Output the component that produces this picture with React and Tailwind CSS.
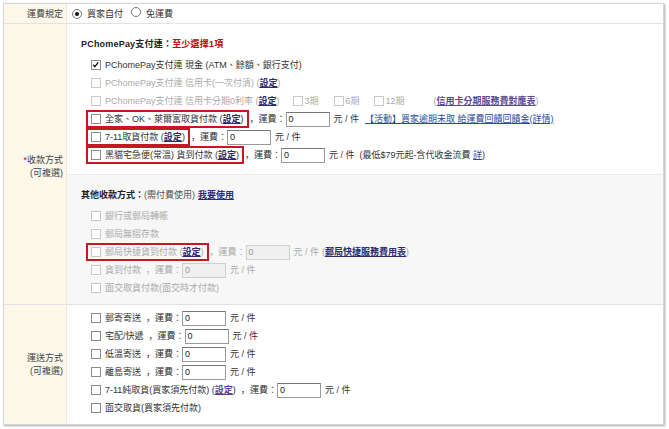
import React from "react";

const CB = ({ checked, disabled }) => (
  <span
    className={`relative inline-flex items-center justify-center w-[10px] h-[10px] shrink-0 border bg-white ${
      disabled ? "border-[#c9c9c9]" : "border-[#8c8c8c]"
    }`}
  >
    {checked && (
      <svg viewBox="0 0 10 10" className="absolute left-0 top-0 w-[8px] h-[8px]">
        <path d="M1.5 4.6 L3.6 7 L7.8 1.8" stroke="#111" strokeWidth="1.7" fill="none" />
      </svg>
    )}
  </span>
);

const Radio = ({ checked }) => (
  <span className="inline-flex items-center justify-center w-[10px] h-[10px] rounded-full border border-[#7a7a7a] bg-white shrink-0">
    {checked && <span className="w-[4px] h-[4px] rounded-full bg-[#111]" />}
  </span>
);

const Row = ({ children }) => (
  <div className="h-[18px] flex items-center whitespace-nowrap">{children}</div>
);

const Box = ({ red, children }) => (
  <span
    className={
      red
        ? "ml-[19px] inline-flex items-center h-[18px] px-[3px] border-2 border-[#c21a20]"
        : "ml-[19px] inline-flex items-center h-[18px] pl-[5px]"
    }
  >
    {children}
  </span>
);

const Set = ({ disabled, purple }) => (
  <span className={disabled ? "text-[#aaa]" : ""}>
    (
    <span
      className={`underline font-semibold ${
        purple ? "text-[#5b3f8c]" : "text-[#2b2b6e]"
      }`}
    >
      設定
    </span>
    )
  </span>
);

const Inp = ({ disabled }) => (
  <span
    className={`inline-flex items-center w-[44px] h-[15px] pl-[2px] border ${
      disabled
        ? "bg-[#f0f0f0] border-[#cfcfcf] text-[#999]"
        : "bg-white border-[#9a9a9a] border-t-[#777] text-[#222]"
    }`}
  >
    0
  </span>
);

const Fee = ({ disabled, space }) => (
  <span className={`inline-flex items-center ${disabled ? "text-[#aaa]" : "text-[#333]"}`}>
    <span className={space ? "ml-[5px]" : "ml-[1px]"}>
      <span className="font-['Noto_Sans_CJK_JP',sans-serif]">，</span>
      運費：
    </span>
    <Inp disabled={disabled} />
    <span className="ml-[4px]">元 / 件</span>
  </span>
);

const Item = ({ checked, disabled, red, children }) => (
  <Box red={red}>
    <CB checked={checked} disabled={disabled} />
    <span className={`ml-[4px] ${disabled ? "text-[#aaa]" : "text-[#333]"}`}>{children}</span>
  </Box>
);

export default function App() {
  return (
    <div className="w-[669px] h-[429px] bg-white pl-[3px] pt-[3px] font-['Liberation_Sans','Noto_Sans_CJK_TC',sans-serif] text-[9px] text-[#333] leading-[12px]">
      <div className="w-[661px] border border-[#d6d6d6] shadow-[1px_1px_2px_rgba(0,0,0,0.35)] bg-white">
        {/* Row 1 */}
        <div className="flex h-[20px] border-b border-[#e2e2e2]">
          <div className="w-[63px] shrink-0 bg-[#fdf8e9] border-r border-[#efe9d8] flex items-center justify-end pr-[3px] text-[#444]">
            運費規定
          </div>
          <div className="flex-1 flex items-center pl-[5px]">
            <Radio checked />
            <span className="ml-[5px]">買家自付</span>
            <span className="ml-[8px]">
              <Radio />
            </span>
            <span className="ml-[5px]">免運費</span>
          </div>
        </div>

        {/* Row 2 */}
        <div className="flex border-b border-[#e2e2e2]">
          <div className="w-[63px] shrink-0 bg-[#fdf8e9] border-r border-[#efe9d8] flex flex-col items-end justify-center pr-[3px] pt-[6px] leading-[13px] text-[#444]">
            <div>
              <span className="text-[#d40000]">*</span>收款方式
            </div>
            <div>(可複選)</div>
          </div>
          <div className="flex-1">
            <div className="pt-[11px] pb-[10px] bg-white">
              <div className="h-[18px] flex items-center pl-[14px] font-bold text-[#222] tracking-[0.2px]">
                PChomePay支付連：<span className="text-[#c80000]">至少選擇1項</span>
              </div>
              <div className="mt-[3px]">
                <Row>
                  <Item checked>PChomePay支付連 現金 (ATM、餘額、銀行支付)</Item>
                </Row>
                <Row>
                  <Item disabled>
                    PChomePay支付連 信用卡(一次付清) <Set disabled />
                  </Item>
                </Row>
                <Row>
                  <Item disabled>
                    PChomePay支付連 信用卡分期0利率 <Set disabled />
                  </Item>
                  <span className="ml-[13px] inline-flex items-center text-[#aaa]">
                    <CB disabled />
                    <span className="ml-[2px]">3期</span>
                  </span>
                  <span className="ml-[15px] inline-flex items-center text-[#aaa]">
                    <CB disabled />
                    <span className="ml-[2px]">6期</span>
                  </span>
                  <span className="ml-[14px] inline-flex items-center text-[#aaa]">
                    <CB disabled />
                    <span className="ml-[2px]">12期</span>
                  </span>
                  <span className="ml-[29px] text-[#aaa]">
                    (<span className="underline text-[#5c4b8e] font-semibold">信用卡分期服務費對應表</span>)
                  </span>
                </Row>
                <Row>
                  <Item red>
                    全家、OK、萊爾富取貨付款 <Set />
                  </Item>
                  <Fee />
                  <span className="ml-[6px] underline text-[#2b4c9c]">
                    【活動】買家逾期未取 給運費回饋回饋金(詳情)
                  </span>
                </Row>
                <Row>
                  <Item red>
                    7-11取貨付款 <Set />
                  </Item>
                  <Fee />
                </Row>
                <Row>
                  <Item red>
                    黑貓宅急便(常溫) 貨到付款 <Set />
                  </Item>
                  <Fee />
                  <span className="ml-[5px]">
                    (最低$79元起-含代收金流費 <span className="underline text-[#2b4c9c]">詳</span>)
                  </span>
                </Row>
              </div>
            </div>

            <div className="pt-[11px] pb-[7px] bg-[#f7f7f7] border-t border-[#ececec]">
              <div className="h-[18px] flex items-center pl-[14px] whitespace-nowrap">
                <span className="font-bold text-[#222]">其他收款方式：</span>
                <span className="text-[#555]">(需付費使用)</span>
                <span className="ml-[3px] underline text-[#2b2b7a] font-semibold">我要使用</span>
              </div>
              <div className="mt-[3px]">
                <Row>
                  <Item disabled>銀行或郵局轉帳</Item>
                </Row>
                <Row>
                  <Item disabled>郵局無摺存款</Item>
                </Row>
                <Row>
                  <Item disabled red>
                    郵局快捷貨到付款 <Set />
                  </Item>
                  <Fee disabled />
                  <span className="ml-[3px] text-[#aaa]">
                    (<span className="underline text-[#2b2b6e] font-semibold">郵局快捷服務費用表</span>)
                  </span>
                </Row>
                <Row>
                  <Item disabled>貨到付款</Item>
                  <Fee disabled space />
                </Row>
                <Row>
                  <Item disabled>面交取貨付款(面交時才付款)</Item>
                </Row>
              </div>
            </div>
          </div>
        </div>

        {/* Row 3 */}
        <div className="flex">
          <div className="w-[63px] shrink-0 bg-[#fdf8e9] border-r border-[#efe9d8] flex flex-col items-end justify-center pr-[3px] leading-[13px] text-[#444]">
            <div>運送方式</div>
            <div>(可複選)</div>
          </div>
          <div className="flex-1 pt-[4px] pb-[7px]">
            <Row>
              <Item>郵寄寄送</Item>
              <Fee space />
            </Row>
            <Row>
              <Item>宅配/快遞</Item>
              <Fee space />
            </Row>
            <Row>
              <Item>低溫寄送</Item>
              <Fee space />
            </Row>
            <Row>
              <Item>離島寄送</Item>
              <Fee space />
            </Row>
            <Row>
              <Item>
                7-11純取貨(買家須先付款) <Set purple />
              </Item>
              <Fee space />
            </Row>
            <Row>
              <Item>面交取貨(買家須先付款)</Item>
            </Row>
          </div>
        </div>
      </div>
    </div>
  );
}
